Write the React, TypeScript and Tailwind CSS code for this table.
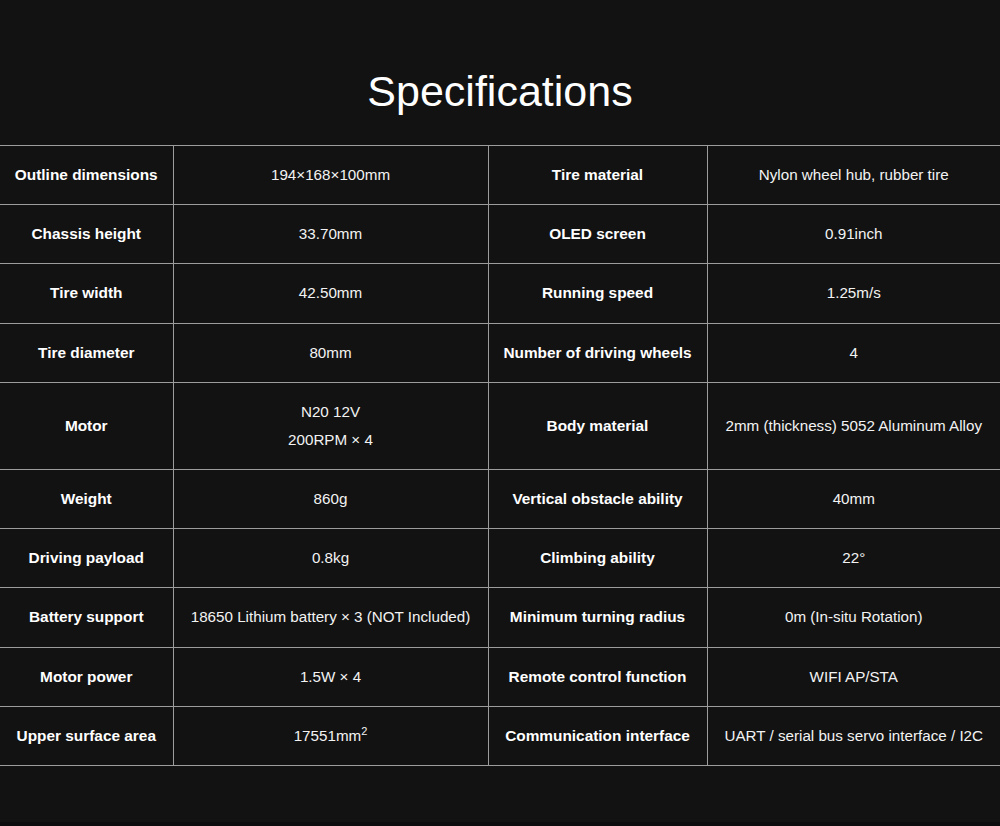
import React from "react";

type Row = { a: string; av: React.ReactNode; b: string; bv: React.ReactNode };

const rows: Row[] = [
  { a: "Outline dimensions", av: "194×168×100mm", b: "Tire material", bv: "Nylon wheel hub, rubber tire" },
  { a: "Chassis height", av: "33.70mm", b: "OLED screen", bv: "0.91inch" },
  { a: "Tire width", av: "42.50mm", b: "Running speed", bv: "1.25m/s" },
  { a: "Tire diameter", av: "80mm", b: "Number of driving wheels", bv: "4" },
  {
    a: "Motor",
    av: (
      <>
        N20 12V
        <br />
        200RPM × 4
      </>
    ),
    b: "Body material",
    bv: "2mm (thickness) 5052 Aluminum Alloy",
  },
  { a: "Weight", av: "860g", b: "Vertical obstacle ability", bv: "40mm" },
  { a: "Driving payload", av: "0.8kg", b: "Climbing ability", bv: "22°" },
  { a: "Battery support", av: "18650 Lithium battery × 3 (NOT Included)", b: "Minimum turning radius", bv: "0m (In-situ Rotation)" },
  { a: "Motor power", av: "1.5W × 4", b: "Remote control function", bv: "WIFI AP/STA" },
  {
    a: "Upper surface area",
    av: (
      <>
        17551mm<sup className="text-[11px] relative -top-[6px]">2</sup>
      </>
    ),
    b: "Communication interface",
    bv: "UART / serial bus servo interface / I2C",
  },
];

const cell = "border border-[#9c9c9c] text-center align-middle py-[15.1px] px-1 leading-[28px]";

export default function App() {
  return (
    <div className="w-[1000px] h-[826px] bg-[#121212] flex flex-col overflow-hidden" style={{ fontFamily: '"Liberation Sans", Arial, sans-serif' }}>
      <h1 className="pt-[70px] text-center text-[43px] leading-[43px] font-normal text-white">Specifications</h1>
      <table className="mt-[32px] w-full border-collapse table-fixed text-[#f2f2f2]">
        <colgroup>
          <col className="w-[173px]" />
          <col className="w-[315px]" />
          <col className="w-[219px]" />
          <col className="w-[293px]" />
        </colgroup>
        <tbody>
          {rows.map((r) => (
            <tr key={r.a}>
              <td className={`${cell} border-l-0 font-bold text-white text-[15.4px]`}>{r.a}</td>
              <td className={`${cell} text-[15.2px]`}>{r.av}</td>
              <td className={`${cell} font-bold text-white text-[15.4px]`}>{r.b}</td>
              <td className={`${cell} border-r-0 text-[15.2px]`}>{r.bv}</td>
            </tr>
          ))}
        </tbody>
      </table>
      <div className="flex-1" />
      <div className="h-[4px] bg-[#0c0c0e]" />
    </div>
  );
}
